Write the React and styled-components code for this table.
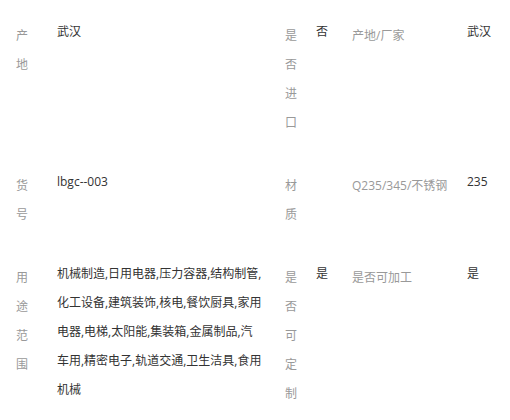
import React from "react"
import styled, { createGlobalStyle } from "styled-components"

const GlobalStyle = createGlobalStyle`
  html, body {
    margin: 0;
    padding: 0;
    background: #fff;
  }
  body {
    font-family: "Open Sans", "Noto Sans CJK SC", sans-serif;
    font-size: 12px;
    color: #333;
  }
`

const SpecTable = styled.div`
  width: 510px;
  padding-top: 4px;
`

const SpecRow = styled.div`
  display: grid;
  grid-template-columns: 57px 228px 31px 36px 115px 1fr;
  align-items: start;
`

const Label = styled.div`
  padding: 17px 0;
  padding-left: ${(p) => p.$indent || 0}px;
  line-height: 29px;
  color: #999;
  width: ${(p) => (p.$narrow ? "13px" : "auto")};
  word-break: break-all;
`

const Value = styled.div`
  padding: 13px 0 21px 0;
  padding-right: ${(p) => p.$right || 0}px;
  line-height: 29px;
  color: #333;
  word-break: break-all;
`

const rows = [
  {
    a: "产地",
    av: "武汉",
    b: "是否进口",
    bv: "否",
    c: "产地/厂家",
    cv: "武汉",
  },
  {
    a: "货号",
    av: "lbgc--003",
    b: "材质",
    bv: "",
    c: "Q235/345/不锈钢",
    cv: "235",
  },
  {
    a: "用途范围",
    av: "机械制造,日用电器,压力容器,结构制管,化工设备,建筑装饰,核电,餐饮厨具,家用电器,电梯,太阳能,集装箱,金属制品,汽车用,精密电子,轨道交通,卫生洁具,食用机械",
    b: "是否可定制",
    bv: "是",
    c: "是否可加工",
    cv: "是",
  },
]

export default function App() {
  return (
    <>
      <GlobalStyle />
      <SpecTable>
        {rows.map((r, i) => (
          <SpecRow key={i}>
            <Label $indent={16} $narrow>
              {r.a}
            </Label>
            <Value $right={22}>{r.av}</Value>
            <Label $narrow>{r.b}</Label>
            <Value>{r.bv}</Value>
            <Label>{r.c}</Label>
            <Value>{r.cv}</Value>
          </SpecRow>
        ))}
      </SpecTable>
    </>
  )
}
